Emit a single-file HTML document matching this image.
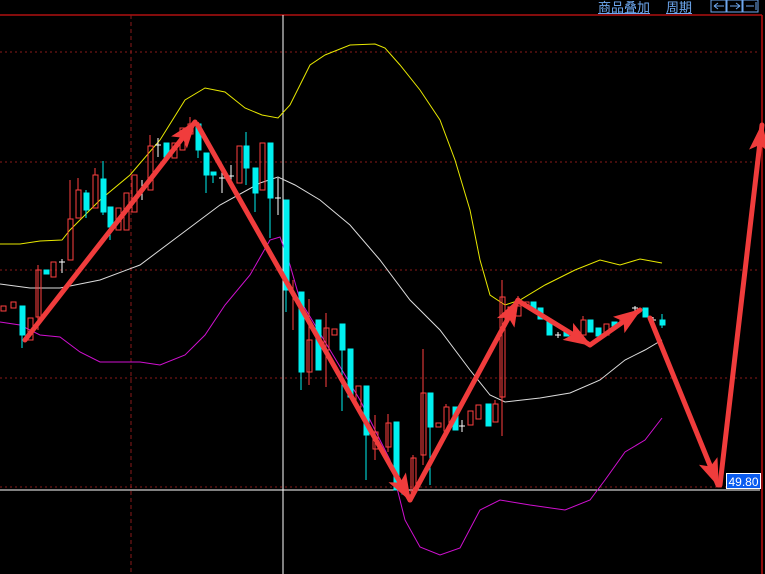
<!DOCTYPE html>
<html><head><meta charset="utf-8"><style>
html,body{margin:0;padding:0;background:#000;width:765px;height:574px;overflow:hidden}
svg{position:absolute;left:0;top:0}
.hd{position:absolute;top:-3px;font:13px "Liberation Sans","Noto Sans CJK SC",sans-serif;color:#6ea8f0;text-decoration:underline}
.price{position:absolute;left:726px;top:473px;width:35px;height:16px;background:#0a5cf0;border:1px solid #fff;color:#fff;font:12px "Liberation Sans",sans-serif;line-height:16px;text-align:center;box-sizing:border-box}
</style></head><body>
<svg width="765" height="574" viewBox="0 0 765 574">
<defs><marker id="ah" markerUnits="userSpaceOnUse" markerWidth="30" markerHeight="22" refX="26" refY="10" orient="auto"><path d="M0,0 L28,10 L0,20 L6,10 Z" fill="#f03c3c"/></marker></defs>
<line x1="0" y1="15" x2="762" y2="15" stroke="#b01010" stroke-width="1.5"/>
<line x1="762" y1="15" x2="762" y2="574" stroke="#c01010" stroke-width="1.5"/>
<g stroke="#8a1a1a" stroke-dasharray="2,3" stroke-width="1">
<line x1="0" y1="52" x2="760" y2="52"/><line x1="0" y1="162" x2="760" y2="162"/><line x1="0" y1="270" x2="760" y2="270"/><line x1="0" y1="378" x2="760" y2="378"/><line x1="0" y1="487" x2="760" y2="487"/>
<line x1="131" y1="15" x2="131" y2="574" stroke-dasharray="4,3"/>
</g>
<line x1="283" y1="15" x2="283" y2="574" stroke="#fff" stroke-width="1"/>
<line x1="0" y1="490" x2="760" y2="490" stroke="#fff" stroke-width="1"/>
<polyline fill="none" stroke="#e8e800" stroke-width="1" points="0,244 20,244 40,241 62,240 70,230 100,200 130,175 160,140 185,100 205,88 225,92 245,108 262,115 278,118 290,105 300,85 310,65 325,55 350,45 375,44 385,48 400,65 420,90 440,120 455,160 470,210 480,260 490,295 505,305 520,300 545,285 575,270 600,260 620,265 640,259 662,263"/>
<polyline fill="none" stroke="#ddd" stroke-width="1" points="0,284 30,288 60,288 100,280 140,265 180,235 220,205 260,183 278,177 295,185 320,200 350,225 380,260 410,300 440,330 470,370 490,395 505,402 540,398 570,393 600,380 625,360 645,350 662,340"/>
<polyline fill="none" stroke="#d010d0" stroke-width="1" points="0,322 20,325 40,335 60,337 80,352 100,362 140,362 160,365 185,355 205,335 225,305 250,275 270,240 280,237 290,265 300,300 330,350 360,400 390,460 405,520 420,547 440,555 460,548 480,510 500,500 530,505 565,510 590,500 605,480 625,452 645,440 662,418"/>
<g fill="none" stroke="#ff4040">
<rect x="1" y="306" width="5" height="5"/><rect x="11" y="302" width="5" height="6"/><rect x="28" y="318" width="5" height="22"/><rect x="36" y="270" width="5" height="47"/><rect x="51" y="262" width="5" height="15"/><rect x="68" y="219" width="5" height="41"/><rect x="76" y="190" width="5" height="28"/><rect x="93" y="175" width="5" height="33"/><rect x="116" y="208" width="5" height="22"/><rect x="124" y="193" width="5" height="37"/><rect x="132" y="175" width="5" height="37"/><rect x="148" y="146" width="5" height="44"/><rect x="172" y="143" width="5" height="15"/><rect x="180" y="128" width="5" height="22"/><rect x="188" y="124" width="5" height="10"/><rect x="237" y="146" width="5" height="37"/><rect x="260" y="143" width="5" height="47"/><rect x="307" y="340" width="5" height="32"/><rect x="324" y="328" width="5" height="22"/><rect x="332" y="329" width="5" height="6"/><rect x="356" y="386" width="5" height="21"/><rect x="373" y="432" width="5" height="17"/><rect x="386" y="423" width="5" height="24"/><rect x="411" y="458" width="5" height="34"/><rect x="421" y="393" width="5" height="62"/><rect x="436" y="423" width="5" height="4"/><rect x="444" y="407" width="5" height="24"/><rect x="468" y="411" width="5" height="14"/><rect x="476" y="405" width="5" height="14"/><rect x="493" y="404" width="5" height="18"/><rect x="500" y="297" width="5" height="100"/><rect x="508" y="307" width="5" height="6"/><rect x="516" y="306" width="5" height="10"/><rect x="524" y="302" width="5" height="4"/><rect x="581" y="320" width="5" height="15"/><rect x="604" y="324" width="5" height="11"/><rect x="620" y="318" width="5" height="3"/>
<path d="M38,265V330M70,180V219M78,178V190M95,168V175M150,135V146M190,117V124M293,280V330M309,299V385M326,313V387M375,415V460M388,414V452M413,455V492M423,349V465M446,404V407M495,400V404M502,280V436M518,296V306M583,316V320"/>
</g>
<g fill="#00f0f0" stroke="#00f0f0">
<rect x="20" y="306" width="5" height="29"/><rect x="44" y="270" width="5" height="4"/><rect x="84" y="193" width="5" height="17"/><rect x="101" y="179" width="5" height="33"/><rect x="108" y="207" width="5" height="20"/><rect x="164" y="143" width="5" height="14"/><rect x="196" y="124" width="5" height="26"/><rect x="204" y="153" width="5" height="22"/><rect x="211" y="172" width="5" height="3"/><rect x="244" y="146" width="5" height="22"/><rect x="253" y="168" width="5" height="25"/><rect x="268" y="143" width="5" height="55"/><rect x="284" y="200" width="5" height="90"/><rect x="299" y="292" width="5" height="80"/><rect x="316" y="320" width="5" height="50"/><rect x="340" y="324" width="5" height="26"/><rect x="348" y="349" width="5" height="48"/><rect x="364" y="386" width="5" height="49"/><rect x="394" y="422" width="5" height="68"/><rect x="402" y="484" width="5" height="10"/><rect x="428" y="393" width="5" height="34"/><rect x="453" y="407" width="5" height="23"/><rect x="486" y="404" width="5" height="22"/><rect x="531" y="302" width="5" height="7"/><rect x="538" y="308" width="5" height="11"/><rect x="547" y="320" width="5" height="15"/><rect x="564" y="332" width="5" height="4"/><rect x="588" y="320" width="5" height="12"/><rect x="596" y="328" width="5" height="8"/><rect x="612" y="322" width="5" height="4"/><rect x="643" y="308" width="5" height="9"/><rect x="660" y="320" width="5" height="5"/>
<path fill="none" d="M22,335V348M86,190V218M103,161V215M110,227V240M198,150V158M206,175V193M213,175V183M246,132V185M255,193V212M270,198V238M286,290V312M301,372V390M342,350V411M366,435V480M396,490V482M430,427V485M662,314V328"/>
</g>
<g stroke="#fff" fill="none"><path d="M62,259V273M59,262H65M142,180V200M139,190H145M158,138V157M155,145H161M222,165V193M219,178H225M231,165V188M228,176H234M278,178V215M275,198H281M462,420V432M459,426H465M558,332V338M555,335H561M635,306V317M632,308H638M653,317V320M650,320H656"/></g>
<g stroke="#f03c3c" stroke-width="5" fill="none" marker-end="url(#ah)" stroke-linecap="round">
<line x1="25" y1="340" x2="195" y2="122"/><line x1="197" y1="124" x2="410" y2="500"/><line x1="410" y1="500" x2="518" y2="300"/><line x1="520" y1="302" x2="590" y2="345"/><line x1="590" y1="345" x2="640" y2="310"/><line x1="650" y1="318" x2="718" y2="485"/><line x1="720" y1="485" x2="762" y2="125"/>
</g>
<g fill="none" stroke="#6ea8f0"><rect x="711" y="0" width="15" height="12"/><rect x="727" y="0" width="15" height="12"/><rect x="743" y="0" width="15" height="12"/>
<path d="M714,6H724M714,6L718,3M714,6L718,9M740,6H730M740,6L736,3M740,6L736,9M756,2V10M746,6H754"/></g>
</svg>
<div class="hd" style="left:598px">商品叠加</div>
<div class="hd" style="left:666px">周期</div>
<div class="price">49.80</div>
</body></html>
